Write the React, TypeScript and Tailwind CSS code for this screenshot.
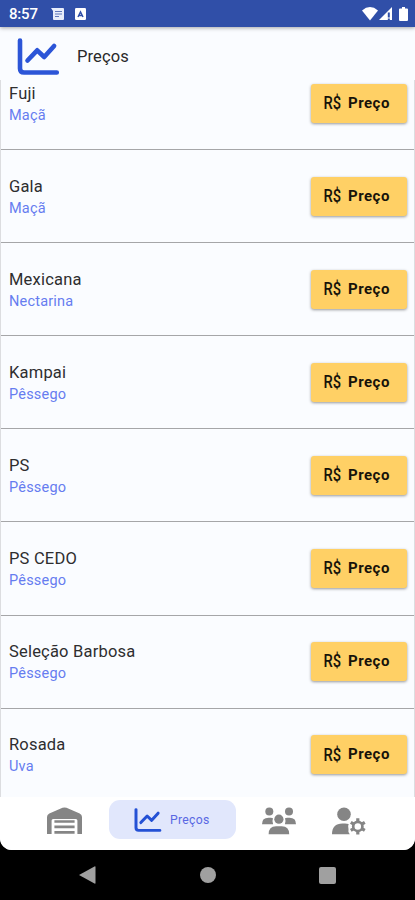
interface Fruit {
  name: string;
  kind: string;
}

const fruits: Fruit[] = [
  { name: "Fuji", kind: "Maçã" },
  { name: "Gala", kind: "Maçã" },
  { name: "Mexicana", kind: "Nectarina" },
  { name: "Kampai", kind: "Pêssego" },
  { name: "PS", kind: "Pêssego" },
  { name: "PS CEDO", kind: "Pêssego" },
  { name: "Seleção Barbosa", kind: "Pêssego" },
  { name: "Rosada", kind: "Uva" },
];

const ChartIcon = ({ className }: { className: string }) => (
  <svg viewBox="0 0 42 37" fill="none" stroke="currentColor" strokeWidth="4.6" strokeLinecap="round" strokeLinejoin="round" className={className}>
    <path d="M2.5 2.5v28q0 4 4 4h32.800" />
    <path d="M10 22.5l9.700-10.200 7 6.700L36.600 8" />
  </svg>
);

const WarehouseIcon = () => (
  <svg viewBox="0 0 35 28" fill="currentColor" className="h-7 w-[35px]">
    <path d="M0 27V10q0-2.500 2.300-3.500L15.500.8q2-.8 4 0L32.700 6.500Q35 7.500 35 10v17h-4.600V13.500q0-1.500-1.500-1.500H6.100q-1.500 0-1.500 1.500V27z" />
    <path d="M7.400 13.200h20.200v2.600H7.400zM7.400 18.600h20.200v2.600H7.400zM7.400 24h20.200v2.700H7.400z" />
  </svg>
);

const PeopleIcon = () => (
  <svg viewBox="0 0 34 28" fill="currentColor" className="h-7 w-[34px]">
    <circle cx="7.300" cy="4.500" r="4" />
    <circle cx="27" cy="4.500" r="4" />
    <path d="M0 17.200q0-6.400 6.500-6.400h2.500q1.200 0 2 .4-1.200 3 .1 6zM34 17.200q0-6.400-6.500-6.400H25q-1.200 0-2 .4 1.200 3-.1 6z" />
    <circle cx="16.900" cy="12.200" r="4.600" />
    <path d="M6.600 27.300q0-8 7.500-8h5.600q7.500 0 7.500 8z" />
  </svg>
);

const UserCogIcon = () => (
  <svg viewBox="0 0 34 28" fill="currentColor" className="h-7 w-[34px]">
    <circle cx="12" cy="7.200" r="6.800" />
    <path d="M0 27.300Q0 16.500 10.500 16.500h2.500q2 0 3.700.6-1.200 2.200-.2 4.800-.8 2.800 1.300 5.400z" />
    {/* gear */}
    <circle cx="25.800" cy="19.400" r="4.600" fill="none" stroke="currentColor" strokeWidth="2.700" />
    <path
      d="M25.800 14.800v-3.500M25.800 24v3.500M21.800 17.100l-3-1.750M29.800 21.700l3 1.750M21.800 21.700l-3 1.750M29.800 17.100l3-1.750"
      stroke="currentColor"
      strokeWidth="3.2"
    />
  </svg>
);

const StatusBar = () => (
  <div className="relative z-10 flex h-[27px] shrink-0 items-center bg-[#304fa8] pr-[7px] pl-[9px] text-white shadow-[0_1px_4px_rgba(0,0,0,0.35)]">
    <span className="w-[42px] pt-px text-[15px] font-medium tracking-[-0.2px]">8:57</span>
    <svg viewBox="0 0 13 12" className="h-3 w-[13px]">
      <path d="M0 0h12q1 0 1 1v10q0 1-1 1H3q-1 0-1-1V3z" fill="#e8edfb" />
      <path d="M4 3.500h7M4 6h7M4 8.500h4" stroke="#6078bb" strokeWidth="1" />
    </svg>
    <svg viewBox="0 0 11 12" className="ml-[11px] h-3 w-[11px]">
      <rect width="11" height="12" rx="1.2" fill="#fff" />
      <path d="M3 9l2.500-5L8 9M4 7.500h3" fill="none" stroke="#304fa8" strokeWidth="1.5" />
    </svg>
    <div className="ml-auto flex items-center">
      <svg viewBox="0 0 16 14" fill="currentColor" className="h-3.5 w-4">
        <path d="M0 3.400Q8-3.200 16 3.400L8 13.500z" />
      </svg>
      <svg viewBox="0 0 13 13" className="ml-px h-[13px] w-[13px]">
        <path d="M0 13L13 0v13z" fill="#fff" />
        <path d="M9.800 5.500v5M9.800 11.400v1.600" stroke="#304fa8" strokeWidth="2" />
      </svg>
      <svg viewBox="0 0 9 14" fill="currentColor" className="ml-[7px] h-3.5 w-[9px]">
        <path d="M3 0h3v1.500h2q1 0 1 1V13q0 1-1 1H1q-1 0-1-1V2.500q0-1 1-1h2z" />
      </svg>
    </div>
  </div>
);

const FruitRow = ({ name, kind }: Fruit) => (
  <li className="flex h-[93.1px] shrink-0 items-center justify-between border-b border-[#a5a6a8] pr-[7px] pl-2">
    <div className="pt-[3px] leading-[22px]">
      <p className="text-[16.5px] tracking-[0.2px] text-[#2e2e2f]">{name}</p>
      <p className="text-[14.5px] tracking-[0.2px] text-[#667cf0]">{kind}</p>
    </div>
    <button className="flex h-[39px] w-24 items-center rounded-[3px] bg-[#ffd065] pl-2.5 text-[#17130a] shadow-[0_1px_3px_rgba(0,0,0,0.4)]">
      <span className="w-[27px] origin-left scale-x-[0.84] text-[17.5px] font-medium">R$</span>
      <span className="text-[15px] font-bold tracking-[0.5px]">Preço</span>
    </button>
  </li>
);

export default function App() {
  return (
    <div className="flex h-[900px] w-[415px] flex-col overflow-hidden bg-black font-['Roboto',sans-serif]">
      <StatusBar />

      <div className="flex h-[823px] shrink-0 flex-col overflow-hidden rounded-b-[12px] bg-[#fafcff]">
        <header className="flex h-[53px] shrink-0 items-center pt-1.5 pl-[17px]">
          <ChartIcon className="h-[37px] w-[43px] text-[#2c55d7]" />
          <h1 className="ml-[17px] pt-0.5 text-[16.5px] tracking-[0.1px] text-[#29292a]">Preços</h1>
        </header>

        <main className="h-[717px] shrink-0 overflow-hidden border-x border-[#dcdde0]">
          <ul className="-mt-[23px] flex flex-col">
            {fruits.map((fruit) => (
              <FruitRow key={fruit.name} {...fruit} />
            ))}
          </ul>
        </main>

        <nav className="flex h-[53px] shrink-0 items-start bg-white pt-[3px] pl-[47px] text-[#858585]">
          <div className="mt-[7px]">
            <WarehouseIcon />
          </div>
          <div className="ml-[27px] flex h-[39px] w-[127px] items-center rounded-[11px] bg-[#e1e7fc] pl-[25px]">
            <ChartIcon className="h-6 w-7 text-[#2451d5]" />
            <span className="ml-2 pt-0.5 text-[12.2px] tracking-[0.3px] text-[#5968e3]">Preços</span>
          </div>
          <div className="mt-[7px] ml-[26px]">
            <PeopleIcon />
          </div>
          <div className="mt-[7px] ml-9">
            <UserCogIcon />
          </div>
        </nav>
      </div>

      {/* system navigation */}
      <div className="flex h-[50px] items-center pl-[79px] text-[#a0a0a0]">
        <svg viewBox="0 0 17 18" fill="currentColor" className="h-[18px] w-[17px]">
          <path d="M0 9L15.500.4Q16.500 0 16.500 1v16q0 1-1 .6z" />
        </svg>
        <div className="ml-[104px] size-4 rounded-full bg-[#a0a0a0]" />
        <div className="ml-[103px] h-[17px] w-[17px] rounded-[2px] bg-[#a0a0a0]" />
      </div>
    </div>
  );
}
